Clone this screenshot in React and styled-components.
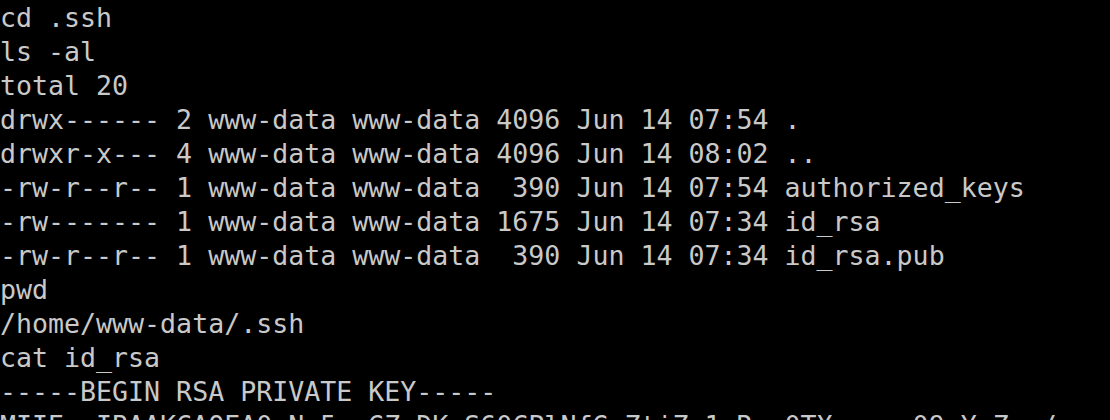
import React from 'react';
import styled, { createGlobalStyle } from 'styled-components';

const GlobalStyle = createGlobalStyle`
  html, body {
    margin: 0;
    padding: 0;
    background: #000;
    overflow: hidden;
  }
`;

const Screen = styled.div`
  width: 1110px;
  height: 420px;
  background: #000;
  overflow: hidden;
  padding-top: 1px;
`;

const Line = styled.pre`
  margin: 0;
  font-family: "DejaVu Sans Mono", "Liberation Mono", monospace;
  font-size: 26.6px;
  line-height: 34px;
  color: #c9c9c9;
  white-space: pre;
`;

const lines = [
  'cd .ssh',
  'ls -al',
  'total 20',
  'drwx------ 2 www-data www-data 4096 Jun 14 07:54 .',
  'drwxr-x--- 4 www-data www-data 4096 Jun 14 08:02 ..',
  '-rw-r--r-- 1 www-data www-data  390 Jun 14 07:54 authorized_keys',
  '-rw------- 1 www-data www-data 1675 Jun 14 07:34 id_rsa',
  '-rw-r--r-- 1 www-data www-data  390 Jun 14 07:34 id_rsa.pub',
  'pwd',
  '/home/www-data/.ssh',
  'cat id_rsa',
  '-----BEGIN RSA PRIVATE KEY-----',
  'MIIEowIBAAKCAQEA0wNx5eoGZrDKmS60CPlNfGaZtiZs1wRxa0TXvo+sw09aYcZnm/wxe',
];

const App = () => {
  return (
    <>
      <GlobalStyle />
      <Screen>
        {lines.map((text, i) => (
          <Line key={i}>{text}</Line>
        ))}
      </Screen>
    </>
  );
};

export default App;
